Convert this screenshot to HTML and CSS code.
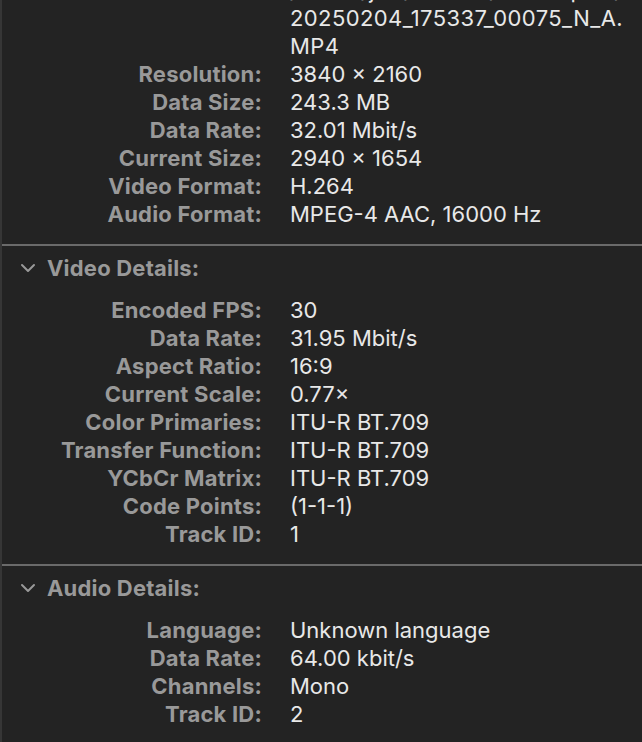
FILE: index.html
```html
<!DOCTYPE html>
<html>
<head>
    <title>Movie Inspector</title>
    <link rel="stylesheet" href="styles.css">
</head>
<body>
    <div class="panel">

        <dl class="props top">
            <dt></dt><dd class="path">/Users/jeff/Movies/DJI_Export/DJI_</dd>
            <dt></dt><dd class="path">20250204_175337_00075_N_A.</dd>
            <dt></dt><dd class="path">MP4</dd>
            <dt>Resolution:</dt><dd>3840 × 2160</dd>
            <dt>Data Size:</dt><dd>243.3 MB</dd>
            <dt>Data Rate:</dt><dd>32.01 Mbit/s</dd>
            <dt>Current Size:</dt><dd>2940 × 1654</dd>
            <dt>Video Format:</dt><dd>H.264</dd>
            <dt>Audio Format:</dt><dd>MPEG-4 AAC, 16000 Hz</dd>
        </dl>

        <section class="group">
            <div class="group-head">
                <svg class="chevron" width="16" height="10" viewBox="0 0 16 10"><path d="M2 2 L8 8 L14 2" /></svg>
                <span>Video Details:</span>
            </div>
            <dl class="props">
                <dt>Encoded FPS:</dt><dd>30</dd>
                <dt>Data Rate:</dt><dd>31.95 Mbit/s</dd>
                <dt>Aspect Ratio:</dt><dd>16:9</dd>
                <dt>Current Scale:</dt><dd>0.77×</dd>
                <dt>Color Primaries:</dt><dd>ITU-R BT.709</dd>
                <dt>Transfer Function:</dt><dd>ITU-R BT.709</dd>
                <dt>YCbCr Matrix:</dt><dd>ITU-R BT.709</dd>
                <dt>Code Points:</dt><dd>(1-1-1)</dd>
                <dt>Track ID:</dt><dd>1</dd>
            </dl>
        </section>

        <section class="group">
            <div class="group-head">
                <svg class="chevron" width="16" height="10" viewBox="0 0 16 10"><path d="M2 2 L8 8 L14 2" /></svg>
                <span>Audio Details:</span>
            </div>
            <dl class="props">
                <dt>Language:</dt><dd>Unknown language</dd>
                <dt>Data Rate:</dt><dd>64.00 kbit/s</dd>
                <dt>Channels:</dt><dd>Mono</dd>
                <dt>Track ID:</dt><dd>2</dd>
            </dl>
        </section>

    </div>
</body>
</html>
```

FILE: styles.css
```css
html, body {
    margin: 0;
    padding: 0;
    background-color: #232323;
    overflow: hidden;
}

body {
    font-family: 'Inter', 'Noto Sans', sans-serif;
    font-size: 22px;
    height: 742px;
}

.panel {
    border-left: 2px solid #363636;
    min-height: 742px;
    box-sizing: border-box;
}

.props {
    display: grid;
    grid-template-columns: 260px 1fr;
    column-gap: 28px;
    margin: 0;
    line-height: 28px;
}

.props.top {
    margin-top: -24px;
    padding-bottom: 16px;
}

.props dt {
    text-align: right;
    color: #999;
    font-weight: 700;
    letter-spacing: 0.2px;
}

.props dd {
    margin: 0;
    color: #e8e8e8;
    white-space: nowrap;
}

.props dd.path {
    letter-spacing: 0.4px;
}

.group {
    border-top: 2px solid #6a6a6a;
    padding-top: 8px;
    padding-bottom: 16px;
}

.group-head {
    display: flex;
    align-items: center;
    gap: 11px;
    padding-left: 18px;
    line-height: 28px;
    color: #999;
    font-weight: 700;
    letter-spacing: 0.2px;
    margin-bottom: 14px;
}

.chevron path {
    fill: none;
    stroke: #999;
    stroke-width: 2;
    stroke-linecap: round;
    stroke-linejoin: round;
}
```
